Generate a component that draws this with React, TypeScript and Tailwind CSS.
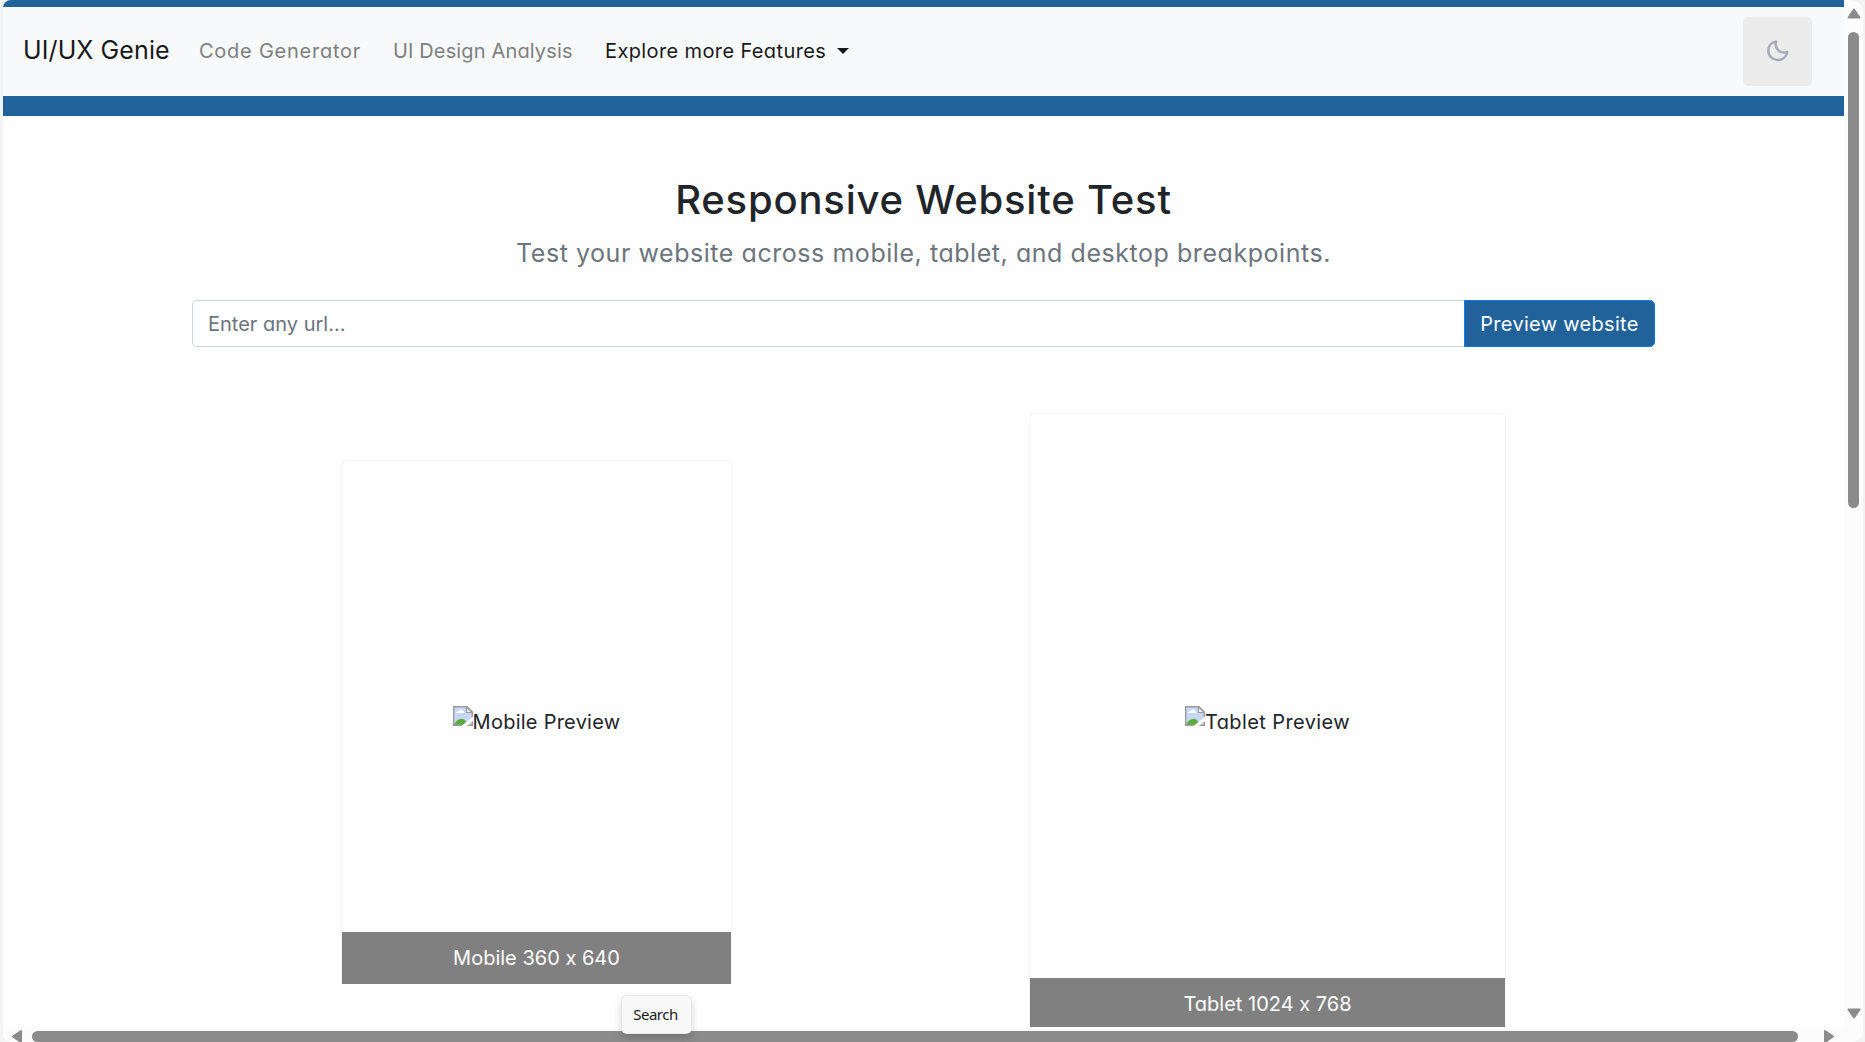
function BrokenImage() {
  return (
    <svg className="block h-5 w-5 shrink-0" viewBox="0 0 20 20">
      <path d="M0.5 0.5H14L19.5 6V19.5H0.5Z" fill="#c7d7f5" />
      <path d="M3 7C3 5.5 5 5 6 5.200C6.500 3 9.500 3 10 5C11 5 11.500 6 11 7Z" fill="#fff" />
      <path d="M1 19C3 14 7 12 10 13C12 13.500 13 15 14 19Z" fill="#5aad3b" />
      <path d="M9 19.300H0.700V0.700H14L19.300 6V11.500M19.300 15.500V19.300H14" fill="none" stroke="#9b9b9b" strokeWidth="1.400" />
      <path d="M8.500 20L20 10.500V14.500L14 20Z" fill="#fff" />
      <path d="M13.500 1V6.500H19Z" fill="#fff" stroke="#9b9b9b" strokeWidth="1.200" />
    </svg>
  );
}

function Triangle({ className }: { className: string }) {
  return (
    <svg className={className} viewBox="0 0 14 11">
      <path d="M7 1.500L12.500 9.500H1.500Z" fill="#8b8b8b" stroke="#8b8b8b" strokeWidth="2" strokeLinejoin="round" />
    </svg>
  );
}

function Navbar() {
  return (
    <nav className="flex h-[89px] items-center bg-[#f8f9fb] pr-8 pl-5 whitespace-nowrap">
      <a className="w-[176px] pb-px text-[25px] tracking-[0.1px] text-[#18191a]">UI/UX Genie</a>
      <a className="w-[194px] pb-[2px] text-[20px] tracking-[0.75px] text-[#7e7f80]">Code Generator</a>
      <a className="w-[212px] pb-[2px] text-[20px] tracking-[0.14px] text-[#7e7f80]">UI Design Analysis</a>
      <a className="w-[232px] pb-[2px] text-[20px] tracking-[0.38px] text-[#18191a]">Explore more Features</a>
      <svg className="mb-[2px] h-[6px] w-3" viewBox="0 0 12 6"><path d="M0 0H12L6 6Z" fill="#18191a" /></svg>
      <button className="ml-auto flex h-[69px] w-[69px] items-center justify-center rounded-[5px] bg-[#ececec]">
        <svg className="mb-px h-[22px] w-[22px]" viewBox="0 0 22 22" fill="none">
          <path d="M9 1.400C4.600 2 1.200 5.800 1.300 10.800C1.500 16.300 5.800 20 10.600 20C15.500 20 19.300 16.600 20.300 11.900C17.200 13 13.500 12.600 11.100 10.200C8.800 7.900 8.200 4.400 9 1.400Z" stroke="#a9a9bd" strokeWidth="2.500" strokeLinejoin="round" />
        </svg>
      </button>
    </nav>
  );
}

interface PreviewProps {
  card: string;
  bar: string;
  alt: string;
  altClass: string;
  size: string;
}

function Preview({ card, bar, alt, altClass, size }: PreviewProps) {
  return (
    <div className={card}>
      <div className="flex min-h-0 flex-1 items-start justify-center text-[20px] leading-[32px] whitespace-nowrap text-[#212529]">
        <div className={altClass}>
          <BrokenImage />
          <span>{alt}</span>
        </div>
      </div>
      <div className={bar}>{size}</div>
    </div>
  );
}

export default function App() {
  return (
    <div className="flex h-[1042px] w-[1865px] overflow-hidden bg-[#f4f4f4] pr-[2px] pl-[3px] [font-family:Inter,'Open_Sans',sans-serif] [font-feature-settings:'cv11','calt'_0]">
      <div className="relative flex w-[1860px] flex-col overflow-hidden rounded-l-lg rounded-r-xl bg-[#fcfcfc]">
        <div className="flex h-[1027px]">
          <main className="h-[1027px] w-[1841px] overflow-hidden bg-[#fefefe]">
            <header className="border-t-[7px] border-b-[20px] border-[#206299]">
              <Navbar />
            </header>
            <h1 className="mt-[54px] text-center text-[40px] leading-[60px] font-medium tracking-[0.8px] whitespace-nowrap text-[#212529]">Responsive Website Test</h1>
            <p className="mt-[4px] text-center text-[25px] leading-[38px] tracking-[0.55px] whitespace-nowrap text-[#6c757d]">Test your website across mobile, tablet, and desktop breakpoints.</p>
            <form className="mt-[28px] ml-[189px] flex h-[47px] w-[1463px]">
              <input className="h-full min-w-0 flex-1 rounded-l-[5px] border border-r-0 border-[#ced4da] bg-white px-[15px] text-[20px] outline-none placeholder:text-[#6c757d]" placeholder="Enter any url..." />
              <button type="button" className="w-[191px] rounded-r-[5px] border border-[#007bff] bg-[#206299] text-[20px] tracking-[0.3px] whitespace-nowrap text-white">Preview website</button>
            </form>
            <div className="mt-[66px] flex items-start">
              <Preview
                card="mt-[47px] ml-[338px] flex h-[524px] w-[391px] flex-col rounded-t-[6px] border border-b-0 border-[#f5f5f5]"
                bar="flex h-[52px] items-center justify-center bg-[#808080] text-[20px] whitespace-nowrap text-white"
                alt="Mobile Preview"
                altClass="mt-[245px] flex tracking-[0.25px]"
                size="Mobile 360 x 640"
              />
              <Preview
                card="ml-[297px] flex h-[618px] w-[477px] flex-col rounded-t-[6px] border border-b-0 border-[#f5f5f5]"
                bar="flex h-[53px] items-center justify-center bg-[#808080] pb-[2px] text-[20px] whitespace-nowrap text-white"
                alt="Tablet Preview"
                altClass="mt-[292px] flex tracking-[0.4px]"
                size="Tablet 1024 x 768"
              />
            </div>
          </main>
          <div className="flex w-[19px] flex-col items-center">
            <Triangle className="mt-[8px] h-[11px] w-[14px] shrink-0" />
            <div className="mt-[13px] h-[476px] w-[11px] shrink-0 rounded-full bg-[#8b8b8b]" />
            <Triangle className="mt-auto mb-[8px] h-[11px] w-[14px] shrink-0 rotate-180" />
          </div>
        </div>
        <div className="flex h-[15px] items-center pt-[4px]">
          <Triangle className="ml-[7px] h-[11px] w-[14px] shrink-0 -rotate-90" />
          <div className="ml-[8px] h-[11px] w-[1766px] shrink-0 rounded-full bg-[#8b8b8b]" />
          <Triangle className="ml-[24px] h-[11px] w-[14px] shrink-0 rotate-90" />
        </div>
        <div className="absolute top-[996px] left-[619px] flex h-[37px] w-[69px] items-center justify-center rounded-[5px] bg-[#f9f9f9] pr-[2px] pb-[1px] text-[15px] text-[#1b1b1b] shadow-[0_0_0_1px_#e9e9e9,0_4px_8px_rgba(0,0,0,0.2)] [font-family:'Noto_Sans','Open_Sans',sans-serif]">
          <span className="tracking-[-0.5px]">Search</span>
        </div>
      </div>
    </div>
  );
}
